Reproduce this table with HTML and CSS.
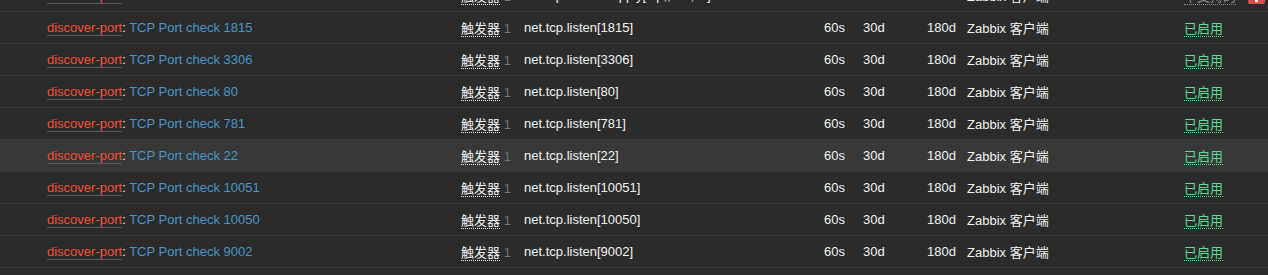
FILE: index.html
```html
<!DOCTYPE html>
<html lang="zh">
<head>
<meta charset="utf-8">
<link rel="stylesheet" href="styles.css">
</head>
<body>
<div class="viewport">
<table class="items">
  <colgroup>
    <col class="c-check"><col class="c-name"><col class="c-trig"><col class="c-key"><col class="c-int"><col class="c-hist"><col class="c-trend"><col class="c-type"><col class="c-status"><col class="c-info">
  </colgroup>
  <tbody>
    <tr>
      <td></td>
      <td><a class="rule">discover-port</a>: <a class="link">TCP Port check 111</a></td>
      <td><a class="hint">触发器</a> <span class="count">1</span></td>
      <td>net.tcp.service.apply[tcp,,111,all]</td>
      <td>60s</td><td>30d</td><td>180d</td>
      <td>Zabbix 客户端</td>
      <td><a class="status grey">不支持的</a></td>
      <td><span class="err"></span></td>
    </tr>
    <tr>
      <td></td>
      <td><a class="rule">discover-port</a>: <a class="link">TCP Port check 1815</a></td>
      <td><a class="hint">触发器</a> <span class="count">1</span></td>
      <td>net.tcp.listen[1815]</td>
      <td>60s</td><td>30d</td><td>180d</td>
      <td>Zabbix 客户端</td>
      <td><a class="status">已启用</a></td>
      <td></td>
    </tr>
    <tr>
      <td></td>
      <td><a class="rule">discover-port</a>: <a class="link">TCP Port check 3306</a></td>
      <td><a class="hint">触发器</a> <span class="count">1</span></td>
      <td>net.tcp.listen[3306]</td>
      <td>60s</td><td>30d</td><td>180d</td>
      <td>Zabbix 客户端</td>
      <td><a class="status">已启用</a></td>
      <td></td>
    </tr>
    <tr>
      <td></td>
      <td><a class="rule">discover-port</a>: <a class="link">TCP Port check 80</a></td>
      <td><a class="hint">触发器</a> <span class="count">1</span></td>
      <td>net.tcp.listen[80]</td>
      <td>60s</td><td>30d</td><td>180d</td>
      <td>Zabbix 客户端</td>
      <td><a class="status">已启用</a></td>
      <td></td>
    </tr>
    <tr>
      <td></td>
      <td><a class="rule">discover-port</a>: <a class="link">TCP Port check 781</a></td>
      <td><a class="hint">触发器</a> <span class="count">1</span></td>
      <td>net.tcp.listen[781]</td>
      <td>60s</td><td>30d</td><td>180d</td>
      <td>Zabbix 客户端</td>
      <td><a class="status">已启用</a></td>
      <td></td>
    </tr>
    <tr class="hover">
      <td></td>
      <td><a class="rule">discover-port</a>: <a class="link">TCP Port check 22</a></td>
      <td><a class="hint">触发器</a> <span class="count">1</span></td>
      <td>net.tcp.listen[22]</td>
      <td>60s</td><td>30d</td><td>180d</td>
      <td>Zabbix 客户端</td>
      <td><a class="status">已启用</a></td>
      <td></td>
    </tr>
    <tr>
      <td></td>
      <td><a class="rule">discover-port</a>: <a class="link">TCP Port check 10051</a></td>
      <td><a class="hint">触发器</a> <span class="count">1</span></td>
      <td>net.tcp.listen[10051]</td>
      <td>60s</td><td>30d</td><td>180d</td>
      <td>Zabbix 客户端</td>
      <td><a class="status">已启用</a></td>
      <td></td>
    </tr>
    <tr>
      <td></td>
      <td><a class="rule">discover-port</a>: <a class="link">TCP Port check 10050</a></td>
      <td><a class="hint">触发器</a> <span class="count">1</span></td>
      <td>net.tcp.listen[10050]</td>
      <td>60s</td><td>30d</td><td>180d</td>
      <td>Zabbix 客户端</td>
      <td><a class="status">已启用</a></td>
      <td></td>
    </tr>
    <tr>
      <td></td>
      <td><a class="rule">discover-port</a>: <a class="link">TCP Port check 9002</a></td>
      <td><a class="hint">触发器</a> <span class="count">1</span></td>
      <td>net.tcp.listen[9002]</td>
      <td>60s</td><td>30d</td><td>180d</td>
      <td>Zabbix 客户端</td>
      <td><a class="status">已启用</a></td>
      <td></td>
    </tr>
  </tbody>
</table>
</div>
</body>
</html>
```

FILE: styles.css
```css
html, body {
  margin: 0;
  padding: 0;
  background: #2b2b2b;
}

body {
  font-family: "Liberation Sans", Arial, "Noto Sans CJK SC", sans-serif;
  font-size: 13px;
  color: #f2f2f2;
}

.viewport {
  width: 1268px;
  height: 275px;
  overflow: hidden;
}

.items {
  margin-top: -20px;
  width: 1268px;
  border-collapse: collapse;
  table-layout: fixed;
}

.c-check { width: 47px; }
.c-name { width: 414px; }
.c-trig { width: 63px; }
.c-key { width: 300px; }
.c-int { width: 39px; }
.c-hist { width: 64px; }
.c-trend { width: 40px; }
.c-type { width: 217px; }
.c-status { width: 64px; }
.c-info { width: 20px; }

.items tr {
  border-bottom: 1px solid #383838;
}

.items tr.hover {
  background: #383838;
}

.items td {
  height: 31px;
  padding: 0;
  vertical-align: middle;
  white-space: nowrap;
  overflow: visible;
}

.rule {
  color: #f0512b;
  border-bottom: 1px solid #555555;
}

.link {
  color: #4796c4;
}

.hint {
  color: #f2f2f2;
  border-bottom: 1px dotted #f2f2f2;
}

.count {
  color: #737373;
}

.status {
  color: #59db8f;
  border-bottom: 1px dotted #59db8f;
}

.status.grey {
  color: #8c8c8c;
  border-bottom-color: #8c8c8c;
}

.err {
  display: inline-block;
  width: 17px;
  height: 17px;
  background: #d64e4e;
  border-radius: 2px;
  vertical-align: middle;
  position: relative;
}

.err::after {
  content: "";
  position: absolute;
  left: 7px;
  top: 12px;
  width: 3px;
  height: 3px;
  background: #ffffff;
}
```
